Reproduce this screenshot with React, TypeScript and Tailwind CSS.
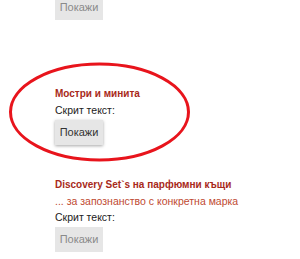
import React from 'react';

type Section = {
  title?: string;
  subtitle?: string;
  active?: boolean;
};

function ShowButton({ active }: { active?: boolean }) {
  return (
    <button
      className={`h-[25px] w-[48px] bg-[#e6e6e6] text-[11px] leading-none ${
        active ? 'text-[#333333] shadow-[0_1px_3px_rgba(0,0,0,0.35)]' : 'text-[#8a8a8a]'
      }`}
    >
      Покажи
    </button>
  );
}

function Block({ title, subtitle, active }: Section) {
  return (
    <div className="flex flex-col items-start">
      <p className="text-[10px] leading-[16px] font-bold text-[#a8291a]">{title}</p>
      {subtitle && <p className="text-[10.5px] leading-[16px] text-[#c04a32]">{subtitle}</p>}
      <p className="text-[10.5px] leading-[16px] text-[#222222]">Скрит текст:</p>
      <div className="mt-[1px]">
        <ShowButton active={active} />
      </div>
    </div>
  );
}

export default function App() {
  return (
    <div
      className="relative h-[259px] w-[300px] overflow-hidden bg-white"
      style={{ fontFamily: '"Liberation Sans", Arial, sans-serif' }}
    >
      <div className="flex flex-col pl-[55px]">
        <div className="-mt-[6px]">
          <ShowButton />
        </div>
        <div className="mt-[66px]">
          <Block title="Мостри и минита" active />
        </div>
        <div className="mt-[32px]">
          <Block
            title="Discovery Set`s на парфюмни къщи"
            subtitle="... за запознанство с конкретна марка"
          />
        </div>
      </div>

      {/* hand-drawn highlight around the middle block */}
      <svg className="pointer-events-none absolute left-0 top-0" width="300" height="259">
        <ellipse cx="99.5" cy="112" rx="89" ry="48" fill="none" stroke="#e8141c" strokeWidth="3" />
      </svg>
    </div>
  );
}
